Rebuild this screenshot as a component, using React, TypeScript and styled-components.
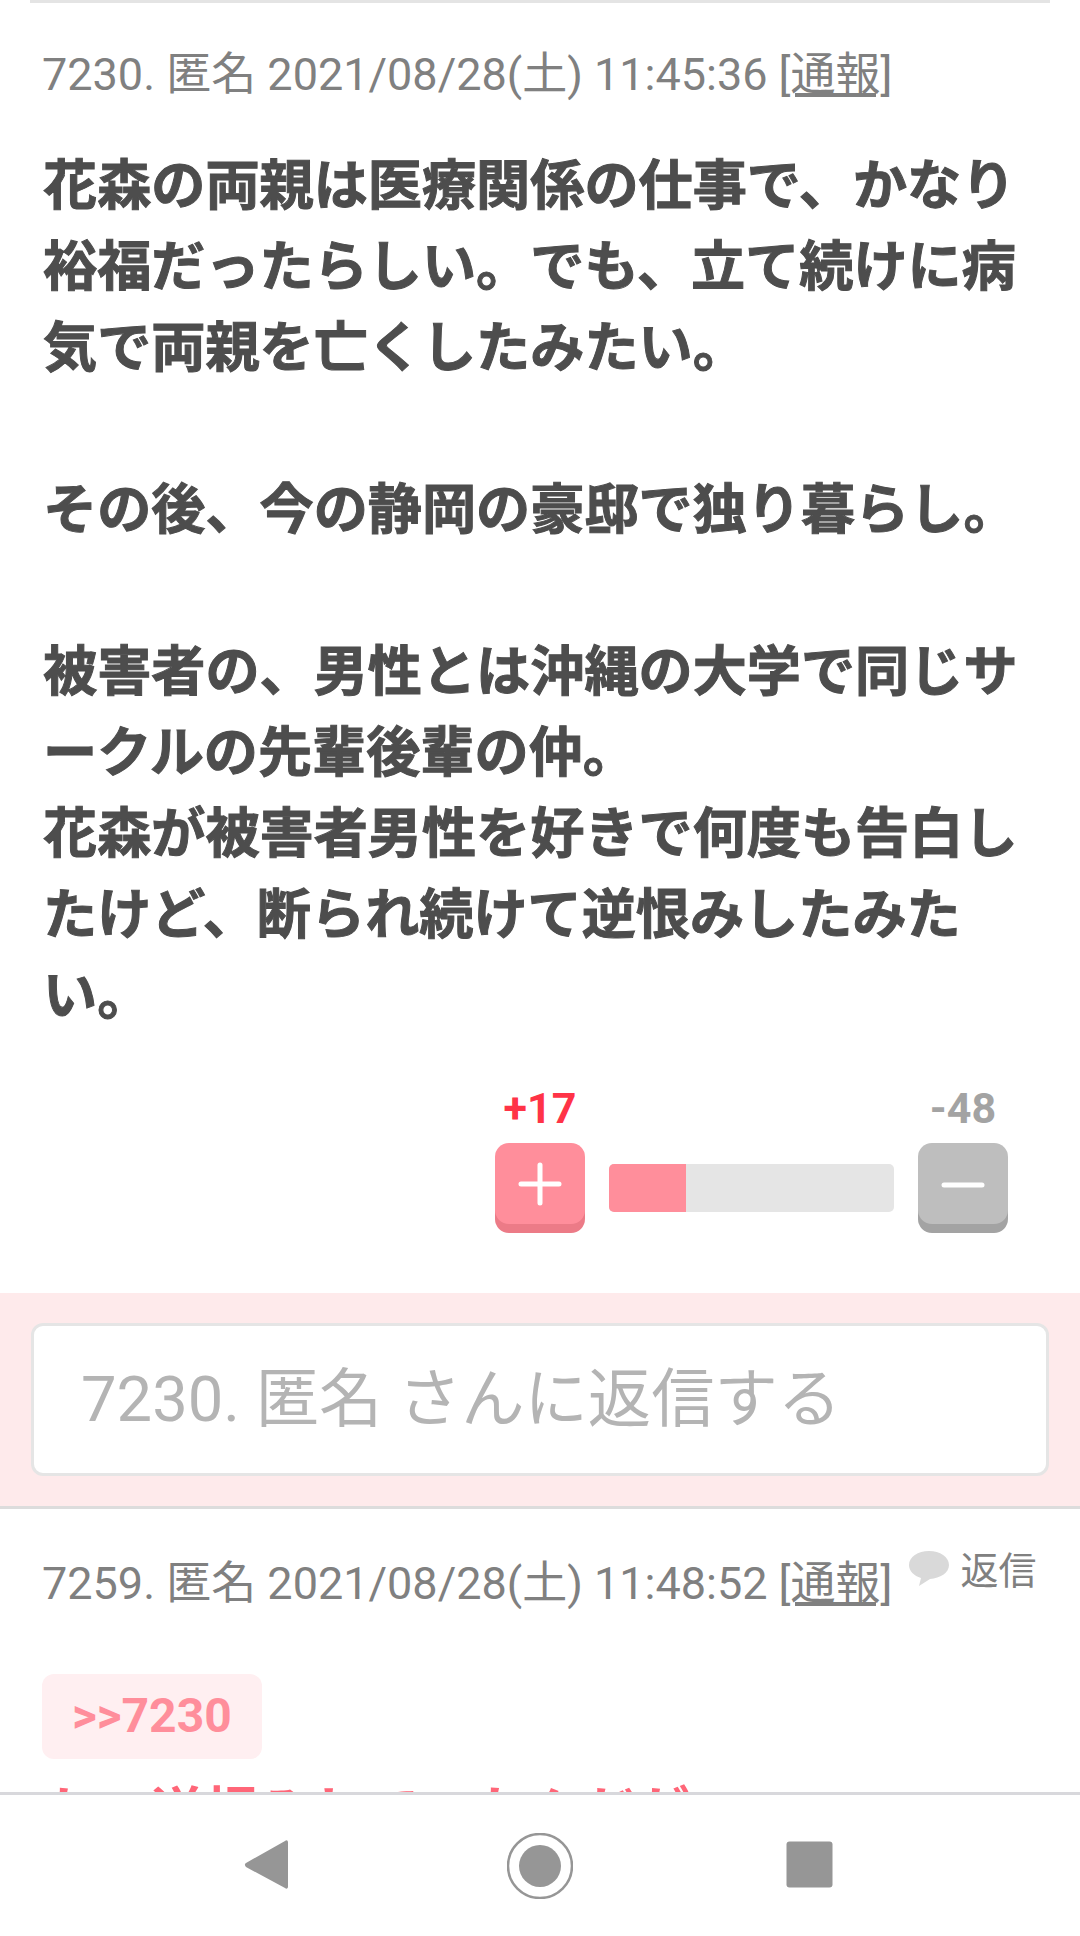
import styled, { createGlobalStyle } from 'styled-components'

const GlobalStyle = createGlobalStyle`
  html, body {
    margin: 0;
    padding: 0;
    background: #fff;
  }
  body {
    font-family: Roboto, "Noto Sans CJK JP", sans-serif;
  }
`

const Page = styled.div`
  position: relative;
  width: 1080px;
  height: 1936px;
  overflow: hidden;
  background: #fff;
`

const TopRule = styled.div`
  height: 3px;
  margin: 0 30px;
  background: #e4e4e4;
`

const Comment = styled.section`
  padding: 0 30px 0 43px;
`

const MetaRow = styled.div<{ $top: number }>`
  display: flex;
  align-items: flex-start;
  padding-top: ${({ $top }) => $top}px;
  margin-left: -1px;
  font-size: 45px;
  line-height: 52px;
  color: #808080;
  white-space: nowrap;
`

const ReportLink = styled.span`
  text-decoration: underline;
  margin-left: 11px;
`

const ReplyLink = styled.div`
  display: flex;
  align-items: flex-start;
  margin: -10px 0 0 17px;
  font-size: 38px;
  line-height: 46px;
  gap: 11px;
`

const BubbleIcon = styled.svg`
  width: 40px;
  height: 36px;
  margin-top: 3px;
  fill: #d9d9d9;
`

const Body = styled.p`
  width: 984px;
  margin: 45px 0 0;
  font-size: 54.15px;
  line-height: 81px;
  font-weight: 700;
  color: #4d4d4d;
  line-break: loose;
  -webkit-text-stroke: 1px #4d4d4d;
`

const VoteArea = styled.div`
  display: flex;
  justify-content: flex-end;
  align-items: flex-end;
  gap: 24px;
  margin: 46px 42px 0 0;
`

const VoteColumn = styled.div`
  display: flex;
  flex-direction: column;
  align-items: center;
  gap: 10px;
`

const VoteCount = styled.span<{ $color: string }>`
  font-size: 43px;
  line-height: 50px;
  font-weight: 700;
  color: ${({ $color }) => $color};
`

const VoteButton = styled.div<{ $face: string; $edge: string }>`
  display: flex;
  align-items: center;
  justify-content: center;
  width: 90px;
  height: 81px;
  border-radius: 14px;
  background: ${({ $face }) => $face};
  box-shadow: 0 9px 0 ${({ $edge }) => $edge};
  margin-bottom: 9px;
`

const VoteGlyph = styled.svg`
  width: 44px;
  height: 44px;
  stroke: #fff;
  stroke-width: 5;
  stroke-linecap: round;
  fill: none;
`

const RatioBar = styled.div`
  width: 285px;
  height: 48px;
  margin-bottom: 21px;
  border-radius: 5px;
  overflow: hidden;
  background: #e5e5e5;
`

const RatioFill = styled.div<{ $share: number }>`
  width: ${({ $share }) => $share}%;
  height: 100%;
  background: #ff8e9b;
`

const ReplyBand = styled.div`
  margin-top: 60px;
  padding: 30px 31px;
  background: #feeaeb;
  border-bottom: 3px solid #dcdcdc;
`

const ReplyBox = styled.div`
  box-sizing: border-box;
  height: 153px;
  padding-left: 47px;
  border: 3px solid #e5e5e5;
  border-radius: 12px;
  background: #fff;
  font-size: 63.3px;
  line-height: 147px;
  color: #b4b4b4;
  white-space: nowrap;
`

const QuoteBadge = styled.div`
  display: inline-block;
  margin: 64px 0 0 -1px;
  padding: 0 30px;
  height: 85px;
  border-radius: 12px;
  background: #ffeff1;
  font-size: 48px;
  line-height: 83px;
  font-weight: 700;
  color: #ff8e9b;
`

const RedLine = styled.p`
  margin: 14px 0 0;
  font-size: 54px;
  line-height: 81px;
  font-weight: 700;
  color: #ff6678;
  white-space: nowrap;
`

const NavBar = styled.nav`
  position: absolute;
  left: 0;
  right: 0;
  bottom: 0;
  display: flex;
  align-items: center;
  justify-content: center;
  gap: 203px;
  box-sizing: border-box;
  height: 144px;
  background: #fff;
  border-top: 3px solid #d8d8dc;
`

const NavIcon = styled.svg`
  width: 66px;
  height: 66px;
  fill: #969696;
`

export default function App() {
  return (
    <Page>
      <GlobalStyle />
      <TopRule />
      <Comment>
        <MetaRow $top={46}>
          7230. 匿名 2021/08/28(土) 11:45:36<ReportLink>[通報]</ReportLink>
        </MetaRow>
        <Body>
          花森の両親は医療関係の仕事で、かなり裕福だったらしい。でも、立て続けに病気で両親を亡くしたみたい。
          <br />
          <br />
          その後、今の静岡の豪邸で独り暮らし。
          <br />
          <br />
          被害者の、男性とは沖縄の大学で同じサークルの先輩後輩の仲。
          <br />
          花森が被害者男性を好きで何度も告白したけど、断られ続けて逆恨みしたみたい。
        </Body>
        <VoteArea>
          <VoteColumn>
            <VoteCount $color="#ff3347">+17</VoteCount>
            <VoteButton $face="#ff8e9b" $edge="#ec7b87">
              <VoteGlyph viewBox="0 0 44 44">
                <path d="M22 3v38M3 22h38" />
              </VoteGlyph>
            </VoteButton>
          </VoteColumn>
          <RatioBar>
            <RatioFill $share={27} />
          </RatioBar>
          <VoteColumn>
            <VoteCount $color="#a3a3a3">-48</VoteCount>
            <VoteButton $face="#bebebe" $edge="#a3a3a3">
              <VoteGlyph viewBox="0 0 44 44">
                <path d="M3 23h38" />
              </VoteGlyph>
            </VoteButton>
          </VoteColumn>
        </VoteArea>
      </Comment>
      <ReplyBand>
        <ReplyBox>7230. 匿名 さんに返信する</ReplyBox>
      </ReplyBand>
      <Comment>
        <MetaRow $top={49}>
          7259. 匿名 2021/08/28(土) 11:48:52<ReportLink>[通報]</ReportLink>
          <ReplyLink>
            <BubbleIcon viewBox="0 0 40 36">
              <path d="M20 0C9 0 0 6 0 14c0 6 5 11 12 13l-2 8 11-7c10-1 19-6 19-14C40 6 31 0 20 0z" />
            </BubbleIcon>
            返信
          </ReplyLink>
        </MetaRow>
        <QuoteBadge>&gt;&gt;7230</QuoteBadge>
        <RedLine>かつ逆恨みしていたんだが</RedLine>
      </Comment>
      <NavBar>
        <NavIcon viewBox="0 0 66 66">
          <path d="M47 8c1.5-1.5 3-.5 3 1.5v44c0 2-1.5 3-3 1.5L8 34c-1.5-1.5-1.5-3 0-4z" />
        </NavIcon>
        <NavIcon viewBox="0 0 66 66">
          <circle cx="33" cy="33" r="21" />
          <circle cx="33" cy="33" r="32" fill="none" stroke="#969696" strokeWidth="2.5" />
        </NavIcon>
        <NavIcon viewBox="0 0 66 66">
          <rect x="10.5" y="8.5" width="46" height="46" rx="3" />
        </NavIcon>
      </NavBar>
    </Page>
  )
}
